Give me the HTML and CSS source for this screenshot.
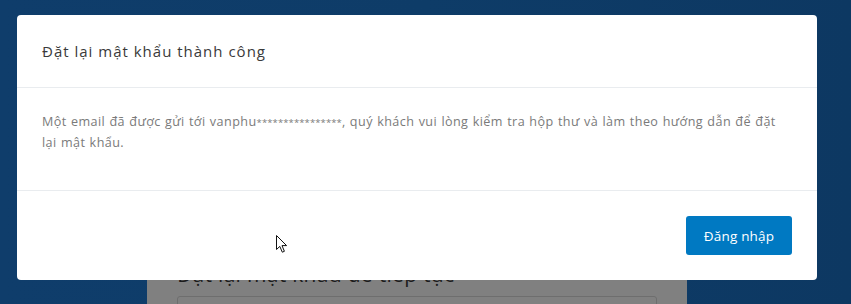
FILE: index.html
```html
<!DOCTYPE html>
<html lang="vi">

<head>
    <meta charset="UTF-8">
    <meta name="viewport" content="width=device-width, initial-scale=1.0">
    <title>Đặt lại mật khẩu</title>
    <link rel="stylesheet" href="styles.css">
</head>

<body>

    <div class="page-card">
        <h2 class="page-title">Đặt lại mật khẩu để tiếp tục</h2>
        <div class="page-input"></div>
    </div>

    <div class="modal">
        <div class="modal-header">
            <h5 class="modal-title">Đặt lại mật khẩu thành công</h5>
        </div>
        <div class="modal-body">
            <p>Một email đã được gửi tới vanphu<span class="masked">****************</span>, quý khách vui lòng kiểm tra hộp thư và làm theo hướng dẫn để đặt lại mật khẩu.</p>
        </div>
        <div class="modal-footer">
            <button class="btn-login">Đăng nhập</button>
        </div>
    </div>

    <!-- mouse pointer -->
    <svg class="cursor" width="14" height="20" viewBox="0 0 14 20">
        <path d="M1.5 1.5 L1.5 15.5 L4.8 12.4 L7.3 18.2 L9.4 17.3 L7 11.6 L11.6 11.6 Z" fill="#fff" stroke="#111" stroke-width="1" stroke-linejoin="miter"/>
    </svg>

</body>

</html>
```

FILE: styles.css
```css
html, body {
    height: 304px;
    overflow: hidden;
}

body {
    margin: 0;
    background: linear-gradient(90deg, #0f3d6b 0%, #0e3c68 50%, #0d3862 100%);
    font-family: "Open Sans", "Noto Sans", sans-serif;
}

.page-card {
    margin: 244px 0 0 147px;
    width: 510px;
    height: 60px;
    padding: 0 0 0 30px;
    overflow: hidden;
    background-color: #808080;
}

.page-title {
    margin: 0;
    padding-top: 16px;
    font-size: 21px;
    font-weight: 400;
    line-height: 28px;
    color: #1c1c1c;
    letter-spacing: 0.3px;
}

.page-input {
    margin-top: 8px;
    width: 478px;
    height: 30px;
    border: 1px solid #6e6e6e;
    border-radius: 3px;
}

.modal {
    position: absolute;
    top: 15px;
    left: 17px;
    width: 800px;
    background-color: #fff;
    border-radius: 4px;
}

.modal-header {
    padding: 25px 25px 24px;
    border-bottom: 1px solid #e9ecef;
}

.modal-title {
    margin: 0;
    font-size: 15px;
    font-weight: 400;
    line-height: 23px;
    color: #3a3a3a;
    letter-spacing: 1px;
}

.modal-body {
    padding: 24px 25px 37px;
    border-bottom: 1px solid #e9ecef;
}

.modal-body p {
    margin: 0;
    font-size: 12.6px;
    line-height: 20px;
    color: #7a7a7a;
    letter-spacing: 0.42px;
    word-spacing: 0.6px;
}

.masked {
    font-size: 9.5px;
    letter-spacing: 0.1px;
}

.modal-footer {
    display: flex;
    justify-content: flex-end;
    padding: 25px;
}

.btn-login {
    width: 106px;
    height: 39px;
    border: none;
    border-radius: 3px;
    background-color: #0079c2;
    color: #fff;
    font-family: "Open Sans", "Noto Sans", sans-serif;
    font-size: 13.5px;
    letter-spacing: 0.2px;
}

.cursor {
    position: absolute;
    top: 234px;
    left: 275px;
}
```
